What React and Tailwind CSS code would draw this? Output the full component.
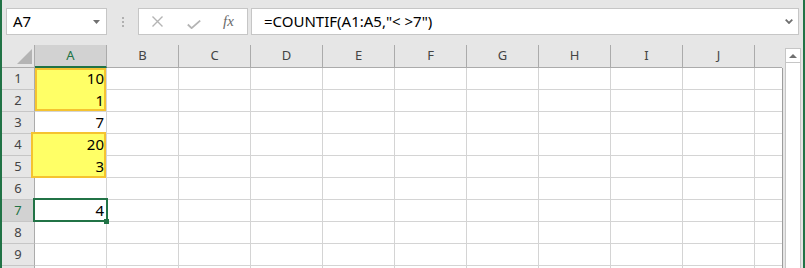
import React from 'react';

const cols = ['A', 'B', 'C', 'D', 'E', 'F', 'G', 'H', 'I', 'J'];
const values = { 1: '10', 2: '1', 3: '7', 4: '20', 5: '3', 7: '4' };
const rows = [1, 2, 3, 4, 5, 6, 7, 8, 9, 10];

function Toolbar() {
  return (
    <div className="h-[45px] shrink-0 flex items-start pt-2 pl-1 pr-1">
      <div className="w-[101px] h-[27px] border border-[#c6c6c6] bg-white flex items-center justify-between pl-[6px] pr-[6px] text-[15px] text-black">
        <span>A7</span>
        <svg width="7" height="4" viewBox="0 0 7 4">
          <path d="M0 0h7L3.5 4z" fill="#707070" />
        </svg>
      </div>
      <div className="w-[31px] h-[27px] flex flex-col items-center justify-center gap-[2px]">
        <span className="w-[2px] h-[2px] bg-[#b0b0b0]" />
        <span className="w-[2px] h-[2px] bg-[#b0b0b0]" />
        <span className="w-[2px] h-[2px] bg-[#b0b0b0]" />
      </div>
      <div className="w-[110px] h-[27px] border border-[#c6c6c6] bg-white flex items-center">
        <svg className="ml-[13px]" width="11" height="11" viewBox="0 0 11 11">
          <path d="M0.5 0.5l10 10M10.5 0.5l-10 10" stroke="#b4b4b4" strokeWidth="1.4" />
        </svg>
        <svg className="ml-[24px] mt-[5px]" width="14" height="9" viewBox="0 0 14 9">
          <path d="M0.8 4.5l3.8 3.6L13.2 0.6" stroke="#b4b4b4" strokeWidth="1.8" fill="none" />
        </svg>
        <span className="ml-[22px] font-['Liberation_Serif',serif] italic text-[15px] text-[#6a6a6a] leading-none">
          fx
        </span>
      </div>
      <div className="ml-[3px] flex-1 h-[27px] border border-[#c6c6c6] bg-white flex items-center justify-between pl-[12px] pr-[5px] text-[15px] text-black">
        <span>=COUNTIF(A1:A5,"&lt; &gt;7")</span>
        <svg width="8" height="5" viewBox="0 0 8 5">
          <path d="M0.7 0.7L4 4l3.3-3.3" stroke="#707070" strokeWidth="1.8" fill="none" />
        </svg>
      </div>
    </div>
  );
}

function HeaderRow() {
  return (
    <div className="flex h-[23px]">
      <div className="w-[33px] h-full border-r border-[#ababab] border-b border-b-[#ababab] flex items-end justify-end pr-[2px] pb-[3px]">
        <svg width="15" height="15" viewBox="0 0 15 15">
          <path d="M15 0v15H0z" fill="#b4b4b4" />
        </svg>
      </div>
      {cols.map((c) => (
        <div
          key={c}
          className={
            c === 'A'
              ? 'w-[72px] h-full bg-[#d2d2d2] border-r border-[#ababab] border-b-2 border-b-[#217346] flex items-center justify-center text-[13px] text-[#217346]'
              : 'w-[72px] h-full border-r border-[#ababab] border-b border-b-[#ababab] flex items-center justify-center text-[13px] text-[#444]'
          }
        >
          {c}
        </div>
      ))}
      <div className="w-[27px] h-full border-b border-[#ababab]" />
    </div>
  );
}

function DataRows() {
  return (
    <div className="border-r border-[#9c9c9c] bg-white">
      {rows.map((r) => (
        <div key={r} className="flex h-[22px]">
          <div
            className={
              r === 7
                ? 'w-[33px] h-full bg-[#d2d2d2] border-r border-[#ababab] border-b border-b-[#c6c6c6] flex items-center justify-center text-[13px] text-[#217346]'
                : 'w-[33px] h-full bg-[#e6e6e6] border-r border-[#ababab] border-b border-b-[#c6c6c6] flex items-center justify-center text-[13px] text-[#444]'
            }
          >
            {r < 10 ? r : null}
          </div>
          {cols.map((c) => (
            <div
              key={c}
              className="w-[72px] h-full border-r border-b border-[#d4d4d4] flex items-center justify-end pr-[2px] text-[15px] text-black"
            >
              {c === 'A' && values[r] ? <span className="relative z-10">{values[r]}</span> : null}
            </div>
          ))}
          <div className="w-[27px] h-full border-b border-[#d4d4d4]" />
        </div>
      ))}
    </div>
  );
}

function Scrollbar() {
  return (
    <div className="flex-1 pl-[2px] pr-[2px] pt-[3px]">
      <div className="w-[16px] h-[240px] border border-[#c6c6c6] bg-white">
        <div className="h-[14px] border-b border-[#c6c6c6] flex items-center justify-center">
          <svg width="8" height="4" viewBox="0 0 8 4">
            <path d="M0 4h8L4 0z" fill="#707070" />
          </svg>
        </div>
      </div>
    </div>
  );
}

export default function App() {
  return (
    <div className="w-[805px] h-[268px] overflow-hidden bg-[#e6e6e6] border-x-2 border-[#217346] flex flex-col font-['Segoe_UI','Noto_Sans',sans-serif]">
      <Toolbar />
      <div className="flex flex-1">
        <div className="relative w-[781px]">
          <HeaderRow />
          <DataRows />
          <div className="absolute left-[33px] top-[23px] w-[71px] h-[43px] bg-[#ffff66] border-2 border-[#f5c330]" />
          <div className="absolute left-[29px] top-[87px] w-[75px] h-[46px] bg-[#ffff66] border-2 border-[#f5c330]" />
          <div className="absolute left-[31px] top-[153px] w-[75px] h-[24px] border-2 border-[#217346]" />
          <div className="absolute left-[102px] top-[174px] w-[5px] h-[5px] bg-[#217346]" />
        </div>
        <Scrollbar />
      </div>
    </div>
  );
}
